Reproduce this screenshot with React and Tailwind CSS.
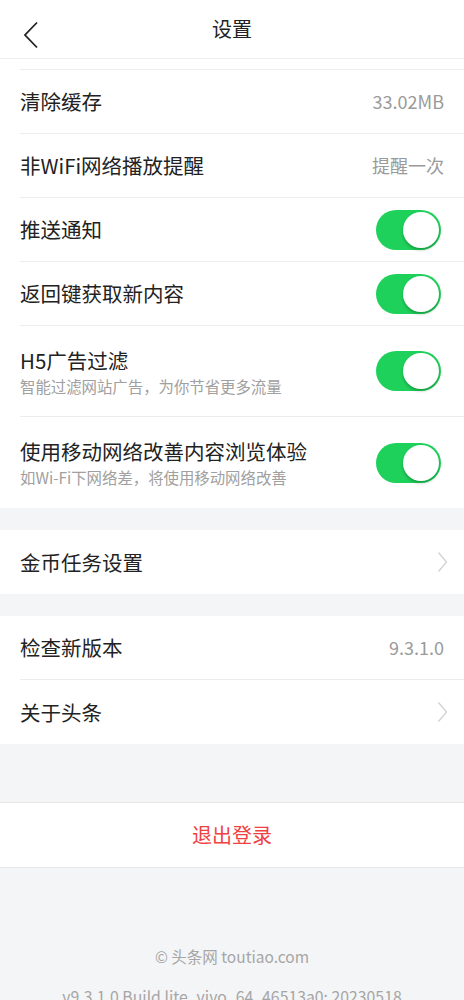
const font = { fontFamily: '"Noto Sans CJK SC", "Noto Sans", sans-serif' };

function Toggle() {
  return (
    <div className="relative w-[65px] h-[40px] rounded-full bg-[#1ed15a] shrink-0">
      <div className="absolute right-[2px] top-[2px] w-[36px] h-[36px] rounded-full bg-white shadow-[0_2px_3px_rgba(0,0,0,0.25)]" />
    </div>
  );
}

function Row({ title, sub, right, last, h = 'h-[64px]' }) {
  return (
    <div className={`flex items-center justify-between ml-5 pr-[23px] ${h} ${last ? '' : 'border-b border-[#ececec]'}`}>
      <div className="flex flex-col">
        <span className="text-[20.5px] leading-[27px] text-[#222]">{title}</span>
        {sub && <span className="text-[15.4px] leading-[20px] text-[#a0a0a0] mt-[2px]">{sub}</span>}
      </div>
      {right}
    </div>
  );
}

const Value = ({ children }) => <span className="text-[18px] text-[#9a9a9a] -mr-[3px]">{children}</span>;
const Arrow = () => (
  <svg width="11" height="22" viewBox="0 0 11 22" className="-mr-[7px]">
    <polyline points="1.5,1.5 9.5,11 1.5,20.5" fill="none" stroke="#d2d2d2" strokeWidth="1.3" />
  </svg>
);

export default function App() {
  return (
    <div className="w-[464px] h-[1000px] overflow-hidden bg-[#f4f5f6]" style={font}>
      <div className="relative h-[59px] bg-white border-b border-[#eeeeee] flex items-center justify-center">
        <svg width="16" height="28" viewBox="0 0 16 28" className="absolute left-[23px] top-[21px]">
          <polyline points="14,1.5 2,14 14,26.5" fill="none" stroke="#222" strokeWidth="1.8" />
        </svg>
        <span className="text-[20px] text-[#222]">设置</span>
      </div>
      <div className="bg-white pt-[10px]">
        <div className="ml-5 border-t border-[#ececec]" />
        <Row title="清除缓存" right={<Value>33.02MB</Value>} />
        <Row title="非WiFi网络播放提醒" right={<Value>提醒一次</Value>} />
        <Row title="推送通知" right={<Toggle />} />
        <Row title="返回键获取新内容" right={<Toggle />} />
        <Row title="H5广告过滤" sub="智能过滤网站广告，为你节省更多流量" right={<Toggle />} h="h-[91px]" />
        <Row title="使用移动网络改善内容浏览体验" sub="如Wi-Fi下网络差，将使用移动网络改善" right={<Toggle />} h="h-[91px]" last />
      </div>
      <div className="h-[22px]" />
      <div className="bg-white">
        <Row title="金币任务设置" right={<Arrow />} last />
      </div>
      <div className="h-[22px]" />
      <div className="bg-white">
        <Row title="检查新版本" right={<Value>9.3.1.0</Value>} />
        <Row title="关于头条" right={<Arrow />} last />
      </div>
      <div className="h-[58px]" />
      <div className="h-[66px] bg-white border-y border-[#e8e8e8] flex items-center justify-center">
        <span className="text-[20px] text-[#f04142]">退出登录</span>
      </div>
      <div className="flex flex-col items-center pt-[77px] text-[15.5px] text-[#a6a6a6]">
        <span className="leading-[22px]">© 头条网 toutiao.com</span>
        <span className="leading-[22px] mt-[19px] text-[15.8px]">v9.3.1.0 Build lite_vivo_64_46513a0; 20230518</span>
      </div>
    </div>
  );
}
